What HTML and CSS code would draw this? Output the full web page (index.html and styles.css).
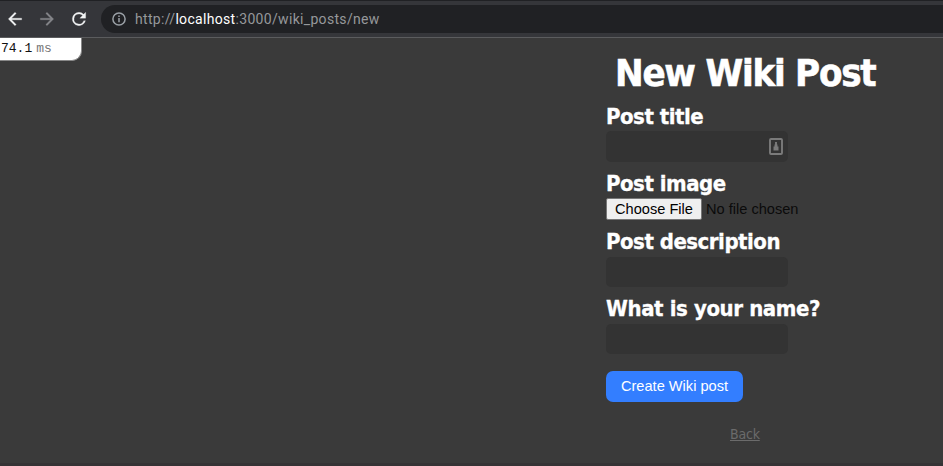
FILE: index.html
```html
<!DOCTYPE html>
<html lang="en">
<head>
<meta charset="utf-8">
<title>New Wiki Post</title>
<link rel="stylesheet" href="styles.css">
</head>
<body>
<header class="toolbar">
  <svg class="nav" viewBox="0 0 24 24"><path d="M20 11H7.83l5.59-5.59L12 4l-8 8 8 8 1.41-1.41L7.83 13H20z"/></svg>
  <svg class="nav nav-off" viewBox="0 0 24 24"><path d="M4 11h12.17l-5.59-5.59L12 4l8 8-8 8-1.41-1.41L16.17 13H4z"/></svg>
  <svg class="nav" viewBox="0 0 24 24"><path d="M17.65 6.35A7.96 7.96 0 0 0 12 4a8 8 0 1 0 7.73 10h-2.08A6 6 0 1 1 12 6c1.66 0 3.14.69 4.22 1.78L13 11h7V4z"/></svg>
  <div class="address">
    <svg class="info" viewBox="0 0 14 14"><circle cx="7" cy="7" r="6.1"/><path d="M7 6v4.3M7 3.5v1.5"/></svg>
    <span class="url">http://<b>localhost</b>:3000/wiki_posts/new</span>
  </div>
</header>
<main class="page">
  <div class="profiler"><b>74.1</b><span>ms</span></div>
  <section class="content">
    <h1>New Wiki Post</h1>
    <form>
      <label class="l-title" for="title">Post title</label>
      <div class="field">
        <input id="title" type="text">
        <svg class="autofill" viewBox="0 0 14 17"><rect x="1" y="1" width="12" height="15" rx="1"/><path d="M7 4v4M5.5 7.5h3M4.5 9.5h5M4.5 11.5h5"/></svg>
      </div>
      <label class="l-image" for="image">Post image</label>
      <div class="file"><button id="image" type="button">Choose File</button><span>No file chosen</span></div>
      <label class="l-desc" for="desc">Post description</label>
      <div class="field"><input id="desc" type="text"></div>
      <label class="l-name" for="name">What is your name?</label>
      <div class="field"><input id="name" type="text"></div>
      <button class="submit" type="button"><span>Create Wiki post</span></button>
    </form>
    <a class="back" href="#">Back</a>
  </section>
</main>
</body>
</html>
```
FILE: styles.css
```css
* { box-sizing: border-box; }
body {
  margin: 0;
  height: 466px;
  overflow: hidden;
  background: #3a3a3a;
  font-family: "DejaVu Sans Condensed", "DejaVu Sans", sans-serif;
  font-stretch: condensed;
}
.toolbar {
  height: 38px;
  display: flex;
  align-items: center;
  padding-left: 5px;
  background: #35363a;
  border-top: 1px solid #202124;
  border-bottom: 1px solid #5b5c5e;
}
.nav { width: 20px; height: 20px; margin-right: 12px; fill: #f1f3f4; stroke: #f1f3f4; stroke-width: .3; }
.nav-off { fill: #85868a; stroke: #85868a; }
.address {
  flex: 1;
  height: 28px;
  display: flex;
  align-items: center;
  border-radius: 14px 0 0 14px;
  background: #202124;
  padding-left: 11px;
}
.info { width: 14px; height: 14px; margin-right: 9px; fill: none; stroke: #9aa0a6; stroke-width: 1.5; }
.url { font: 14px/20px Roboto, sans-serif; letter-spacing: .32px; color: #96989b; white-space: nowrap; }
.url b { font-weight: 400; color: #fff; }
.page { height: 428px; display: flex; justify-content: space-between; align-items: flex-start; border-bottom: 3px solid #353335; }
.profiler {
  width: 82px;
  height: 23px;
  display: flex;
  gap: 4px;
  padding-left: 1px;
  background: #fff;
  border: solid #888;
  border-width: 0 1px 1px 0;
  border-radius: 0 0 10px 0;
  font: 13px/22px "Liberation Mono", monospace;
  color: #111;
  white-space: nowrap;
}
.profiler b { font-weight: 400; }
.profiler span { color: #777; }
.content { width: 337px; }
h1 { margin: 12px 0 0 9px; font-size: 38px; line-height: 46px; font-weight: 700; color: #fff; white-space: nowrap; letter-spacing: -1.22px; -webkit-text-stroke: .6px #fff; }
form { display: flex; flex-direction: column; align-items: flex-start; }
label { display: block; height: 35px; line-height: 41px; font-size: 22px; font-weight: 700; color: #fff; white-space: nowrap; letter-spacing: -.5px; -webkit-text-stroke: .3px #fff; }
.l-image { height: 36px; line-height: 43px; }
.l-desc { height: 37px; line-height: 43px; }
.l-name { height: 37px; line-height: 43px; letter-spacing: -.4px; }
.field { position: relative; width: 182px; height: 30px; }
.l-title + .field { height: 31px; }
.field input { display: block; width: 100%; height: 100%; border: 0; border-radius: 5px; background: #333; color: #fff; }
.autofill { position: absolute; right: 5px; top: 7px; width: 14px; height: 17px; fill: none; stroke: #7b7b7b; stroke-width: 1.9; }
.file { height: 22px; display: flex; align-items: center; font: 14.6px "Liberation Sans", sans-serif; color: #0b0b0b; white-space: nowrap; }
.file button { width: 96px; height: 22px; padding: 0; margin-right: 4px; border: 1px solid #777; border-radius: 2px; background: #efefef; color: #000; font: inherit; }
.submit { width: 137px; height: 31px; margin-top: 17px; padding: 0 0 2px; border: 0; border-radius: 7px; background: #337eff; color: #fff; font: 14.6px "Liberation Sans", sans-serif; white-space: nowrap; }
.back { display: block; width: max-content; margin: 22px 0 0 124px; font-size: 14px; line-height: 20px; color: #6b6b6b; letter-spacing: -.2px; }
```
